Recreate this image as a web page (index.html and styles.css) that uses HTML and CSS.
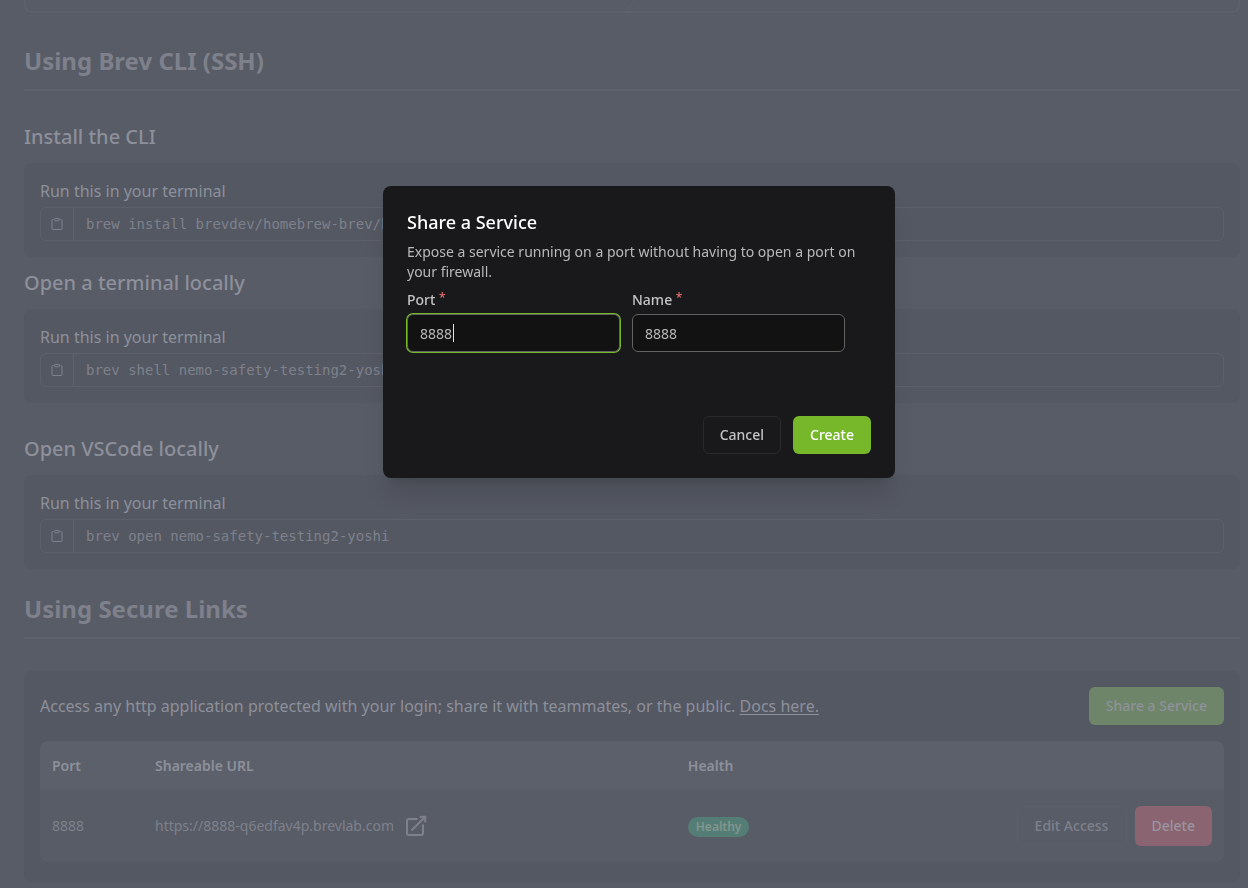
FILE: index.html
```html
<!DOCTYPE html>
<html lang="en">
<head>
<meta charset="utf-8">
<title>Share a Service</title>
<link rel="stylesheet" href="styles.css">
</head>
<body>
<svg class="sprite" aria-hidden="true">
  <symbol id="clipboard" viewBox="0 0 14 14">
    <path d="M3.500 2.500H2.700a.7.7 0 0 0-.7.7v8.600a.7.7 0 0 0 .7.7h8.600a.7.7 0 0 0 .7-.7V3.200a.7.7 0 0 0-.7-.7h-.8M5.200 1.500h3.600a.5.500 0 0 1 .5.500v1.300a.5.500 0 0 1-.5.500H5.200a.5.500 0 0 1-.5-.5V2a.5.500 0 0 1 .5-.5z"/>
  </symbol>
</svg>
<main class="page">
  <div class="card-end"><svg viewBox="0 0 10 10" aria-hidden="true"><path d="M0 10 7 0"/></svg></div>

  <h2>Using Brev CLI (SSH)</h2>

  <section class="step">
    <h3>Install the CLI</h3>
    <div class="panel">
      <p>Run this in your terminal</p>
      <div class="command">
        <button type="button" aria-label="Copy install command"><svg><use href="#clipboard"/></svg></button>
        <code>brew install brevdev/homebrew-brev/brev</code>
      </div>
    </div>
  </section>

  <section class="step">
    <h3>Open a terminal locally</h3>
    <div class="panel">
      <p>Run this in your terminal</p>
      <div class="command">
        <button type="button" aria-label="Copy shell command"><svg><use href="#clipboard"/></svg></button>
        <code>brev shell nemo-safety-testing2-yoshi</code>
      </div>
    </div>
  </section>

  <section class="step step-spaced">
    <h3>Open VSCode locally</h3>
    <div class="panel">
      <p>Run this in your terminal</p>
      <div class="command">
        <button type="button" aria-label="Copy open command"><svg><use href="#clipboard"/></svg></button>
        <code>brev open nemo-safety-testing2-yoshi</code>
      </div>
    </div>
  </section>

  <h2 class="links-title">Using Secure Links</h2>

  <section class="panel links">
    <div class="links-head">
      <p>Access any http application protected with your login; share it with teammates, or the public. <a href="#docs">Docs here.</a></p>
      <button type="button" class="btn btn-share">Share a Service</button>
    </div>
    <table>
      <thead>
        <tr><th class="col-port">Port</th><th class="col-url">Shareable URL</th><th>Health</th><th></th></tr>
      </thead>
      <tbody>
        <tr>
          <td>8888</td>
          <td>
            <div class="url">
              <span>https://8888-q6edfav4p.brevlab.com</span>
              <svg class="external" viewBox="0 0 22 22" aria-hidden="true"><path d="M12.500 4H4a2 2 0 0 0-2 2v12a2 2 0 0 0 2 2h12a2 2 0 0 0 2-2V9.500M6.500 15.500 20.200 1.800M14.800 1.800h5.400v5.400"/></svg>
            </div>
          </td>
          <td><span class="badge">Healthy</span></td>
          <td>
            <div class="actions">
              <button type="button" class="btn btn-edit">Edit Access</button>
              <button type="button" class="btn btn-delete">Delete</button>
            </div>
          </td>
        </tr>
      </tbody>
    </table>
  </section>
</main>

<div class="overlay">
  <form class="modal" role="dialog" aria-modal="true" aria-labelledby="modal-title">
    <h1 id="modal-title">Share a Service</h1>
    <p>Expose a service running on a port without having to open a port on your firewall.</p>
    <div class="fields">
      <div class="field">
        <label for="port">Port <span>*</span></label>
        <div class="port-box">
          <input id="port" class="active" type="text" value="8888">
          <i class="caret"></i>
        </div>
      </div>
      <div class="field">
        <label for="name">Name <span>*</span></label>
        <input id="name" type="text" value="8888">
      </div>
    </div>
    <div class="modal-actions">
      <button type="button" class="btn btn-cancel">Cancel</button>
      <button type="submit" class="btn btn-create">Create</button>
    </div>
  </form>
</div>
</body>
</html>
```

FILE: styles.css
```css
:root {
  --page: #585c66;
  --panel: #545862;
  --line: #5d616c;
  --text: #8d909b;
  --muted: #7e818c;
}

* { box-sizing: border-box; }

body {
  margin: 0;
  overflow: hidden;
  background: var(--page);
  color: var(--text);
  font: 16px/24px "Noto Sans", sans-serif;
}

h1, h2, h3, p { margin: 0; }
button, input { font: inherit; }
.sprite { display: none; }
svg { fill: none; stroke: currentColor; }

.page { padding: 0 8px 0 24px; }

.card-end {
  display: flex;
  justify-content: center;
  height: 13px;
  border: 2px solid var(--line);
  border-top: 0;
  border-radius: 0 0 8px 8px;
  color: var(--line);
}
.card-end svg { width: 10px; height: 11px; }

h2 {
  margin-top: 30px;
  padding-bottom: 10px;
  border-bottom: 2px solid var(--line);
  color: var(--muted);
  font-size: 24px;
  line-height: 36px;
  font-weight: 700;
}
.links-title { margin-top: 22px; }

h3 {
  margin-bottom: 12px;
  font-size: 20px;
  line-height: 28px;
  font-weight: 500;
}

.step { margin-top: 12px; }
h2 + .step, .step-spaced { margin-top: 32px; }

.panel {
  padding: 16px;
  border-radius: 8px;
  background: var(--panel);
}

.command {
  display: flex;
  align-items: stretch;
  height: 34px;
  margin-top: 4px;
  border: 1px solid var(--line);
  border-radius: 6px;
}
.command button {
  display: grid;
  place-items: center;
  width: 33px;
  padding: 0;
  border: 0;
  border-right: 1px solid var(--line);
  background: none;
  color: #7c8291;
}
.command svg { width: 14px; height: 14px; }
.command code {
  padding-left: 12px;
  color: var(--muted);
  font: 14px/32px "DejaVu Sans Mono", monospace;
}

.links { margin-top: 32px; padding-bottom: 20px; }
.links-head {
  display: flex;
  align-items: center;
  justify-content: space-between;
  margin-bottom: 16px;
}
.links-head a { color: inherit; text-underline-offset: 2px; }

.btn {
  height: 38px;
  padding: 0 16px;
  border: 1px solid transparent;
  border-radius: 6px;
  background: none;
  font-size: 14px;
  line-height: 20px;
  font-weight: 500;
}
.btn-share { background: #6e8569; color: #8f929c; }
.btn-edit { height: 40px; min-width: 110px; border-color: #5b5f6a; color: var(--muted); }
.btn-delete { height: 40px; background: #8a6471; color: #9a95a0; }

table {
  width: 100%;
  border-spacing: 0;
  border-radius: 8px;
  overflow: hidden;
  background: var(--page);
  font-size: 14px;
  line-height: 20px;
}
th { height: 49px; padding: 0 12px; background: #5c606b; font-weight: 600; text-align: left; }
td { height: 72px; padding: 0 12px; color: var(--muted); }
.col-port { width: 103px; }
.col-url { width: 45%; }
.url { display: flex; align-items: center; gap: 11px; }
.external { width: 22px; height: 22px; stroke-width: 2; }
.badge {
  display: inline-block;
  padding: 0 8px;
  border-radius: 10px;
  background: #547e75;
  color: #82958f;
  font-size: 12px;
  font-weight: 600;
}
.actions { display: flex; justify-content: flex-end; gap: 8px; }

.overlay {
  position: fixed;
  inset: 0;
  display: flex;
  align-items: flex-start;
  justify-content: center;
  padding: 186px 0 0 30px;
}
.modal {
  width: 512px;
  padding: 24px;
  border-radius: 8px;
  background: #19191b;
  color: #b9b9ba;
  font-size: 14px;
  line-height: 20px;
  box-shadow: 0 20px 25px -5px rgb(0 0 0 / 12%), 0 8px 10px -6px rgb(0 0 0 / 12%);
}
.modal h1 {
  margin-bottom: 8px;
  color: #fff;
  font-size: 18px;
  line-height: 24px;
  font-weight: 500;
}
.fields {
  display: grid;
  grid-template-columns: 1fr 1fr;
  gap: 12px;
  margin-top: 8px;
  padding-right: 26px;
}
.field label { display: block; margin-bottom: 4px; color: #c4c4c5; font-weight: 500; }
.field label span { color: #e5706e; font-size: 12px; line-height: 16px; vertical-align: top; }
.field input {
  display: block;
  width: 100%;
  height: 38px;
  padding: 0 12px;
  border: 1px solid #626263;
  border-radius: 6px;
  outline: 0;
  background: #121212;
  color: #b9b9ba;
}
.field input.active { box-shadow: 0 0 0 1px #76b82a; }
.port-box { position: relative; }
.caret {
  position: absolute;
  top: 10px;
  left: 46px;
  width: 1px;
  height: 18px;
  background: #e4e4e4;
}
.modal-actions {
  display: flex;
  justify-content: flex-end;
  gap: 12px;
  margin-top: 64px;
}
.btn-cancel { border-color: #2a2a2c; color: #c4c4c5; }
.btn-create { background: #76b82a; color: #fff; }
```
